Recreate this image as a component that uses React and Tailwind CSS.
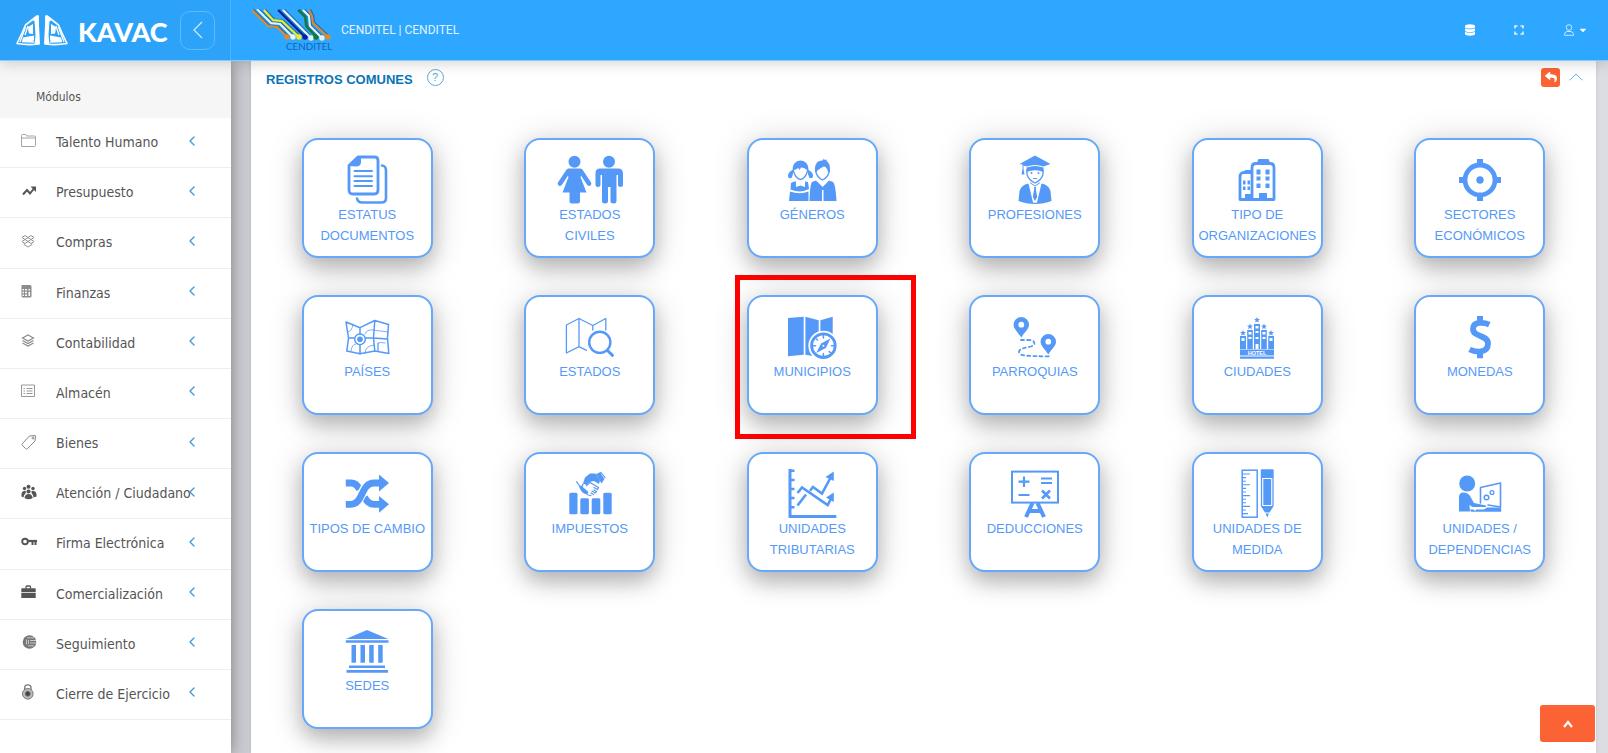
import React from "react";
import { FaDatabase, FaReply, FaCaretDown } from "react-icons/fa";
import { ChevronLeft, ChevronUp } from "lucide-react";

/* ---------- Brand drawings ---------- */

function KavacMark() {
  const half = (
    <g>
      <path d="M21 1L9.500 10L6 18 1 28.500Q12 30.500 22 29V1Z" fill="none" stroke="#fff" strokeWidth="1.600" strokeLinejoin="round" />
      <path d="M15 5L22.500 .5L24 29.500H18.500L19.500 20L18.500 6Z" fill="#fff" />
      <path d="M12 12L17 9V19L13 18.500 12.500 16.500Z M7 22.500L18 20.500V25.500L12 27 6 26.500Z" fill="#fff" />
      <path d="M12 11L9 20M9.500 12L4 27M6 26.500L18 27" stroke="#fff" strokeWidth="1.300" fill="none" />
    </g>
  );
  return (
    <svg viewBox="0 0 52 31" className="h-[31px] w-[52px] shrink-0" aria-hidden="true">
      {half}
      <g transform="translate(52 0) scale(-1 1)">{half}</g>
    </svg>
  );
}

function CenditelLogo() {
  const lines = [
    ["#e08a2c", "0,1 16,17 25,18 35,28"],
    ["#e9f3fb", "5,0 19,14 28,15 41,28"],
    ["#f2ee1c", "12,1 21,11 30,12 47,28"],
    ["#0a1fa0", "26,1 53,28"],
    ["#e9f3fb", "31,1 59,29"],
    ["#0f7d2c", "46,1 53,8 54,17 64,28"],
    ["#e9f3fb", "51,1 57,7 58,17 70,29"],
    ["#e08a2c", "57,1 60,7 61,14 76,28"],
  ];
  return (
    <svg viewBox="0 0 82 42" className="h-[42px] w-[82px] shrink-0" role="img" aria-label="CENDITEL">
      {lines.map(([c, p], i) => {
        const [x, y] = p.split(" ").pop().split(",");
        return (
          <g key={i}>
            <polyline points={p} fill="none" stroke="#1b4a74" strokeWidth="2.200" transform="translate(1.200 -.4)" opacity=".55" />
            <polyline points={p} fill="none" stroke={c} strokeWidth="2" />
            <circle cx={x} cy={y} r="2.700" fill={c} />
          </g>
        );
      })}
      <text x="34" y="41" fontSize="9.800" fontFamily="Lato, sans-serif" fill="#1763b5">CENDITEL</text>
    </svg>
  );
}

/* ---------- Record icons, drawn on a 72 x 49 field ---------- */

const line = { fill: "none", stroke: "currentColor", strokeLinecap: "round", strokeLinejoin: "round" };
const star = "M0-3L.9-1 3-.9 1.300.5 1.900 2.600 0 1.400-1.900 2.600-1.300.5-3-.9-.9-1Z";

const icons = {
  documents: (
    <>
      <path {...line} strokeWidth="2.800" d="M27 2H43.500Q47 2 47 5.500V35Q47 39 43.500 39H22Q18 39 18 35V10.500Z" />
      <path d="M18 11L27 1.500H30V8Q29 11.500 25 11.500Z" fill="currentColor" />
      <path {...line} strokeWidth="2" d="M23.500 16H41M23.500 21.300H41M23.500 26H41M23.500 31H41" />
      <path {...line} strokeWidth="2.600" d="M51 10.500Q55 11 55 15.500V43Q55 47.500 50.500 47.500H31Q27 47.500 26 43.500" />
    </>
  ),
  couple: (
    <g fill="currentColor">
      <circle cx="20.500" cy="6.700" r="6" />
      <circle cx="55" cy="6.700" r="6" />
      <path d="M14 13.500H27L29 17 26.500 22 32.500 37.500H26V46Q26 48.500 23.500 48.500H18Q15.500 48.500 15.500 46V37.500H8.500L14.500 22 12 17Z" />
      <path {...line} strokeWidth="4.600" d="M14 16.500L6 28.500M27 16.500L35 28.500" />
      <path d="M46 13.500H64Q69 13.500 69 18.500V30Q69 32 66.500 32 64 32 64 30V20H62.500V46Q62.500 48.500 59.500 48.500 56.500 48.500 56.500 46V32H54V46Q54 48.500 51 48.500 48 48.500 48 46V20H46.500V30Q46.500 32 44 32 41.500 32 41.500 30V18.500Q41.500 13.500 46 13.500Z" />
    </g>
  ),
  children: (
    <g fill="currentColor">
      <path d="M24.500 5.500Q32.500 6 32.500 15 37 17 37 21 37 24 33.500 23 32 20 31.500 16.500 31 14 28 13 L25 12.500 23.500 15 22.500 13 17.500 15.500Q17 20 15.500 23 12 24 12 21 12 17 16.500 15 16.500 6 24.500 5.500Z" />
      <path {...line} strokeWidth="1.300" d="M17.500 16Q19.500 23.500 24.500 24.500 29.500 23.500 31.500 16M39.500 16Q41.500 23 46.500 25 51.500 23 53.500 16" />
      <path d="M46.500 5.500L48 3.500 48.500 5 51 4.500 50.500 6Q54.500 8 54 17L52 17Q51 12 48 11.500 42 14 40.500 17L39 17Q38 5.500 46.500 5.500Z" />
      <path d="M18 26.500H20L20 32 24.500 30.500 29 32 29 26.500 32 27 33 34Q25 38.500 14.500 34.500L15 28Z" />
      <path d="M14 36.500Q24 40 32.500 36.500V46H13Z" />
      <path d="M40 25.500L46.700 32 53 25.500 57 27Q59.500 29 60.500 46H47.500V35H46V46H33.500Q34 29 36 27Z" />
    </g>
  ),
  graduate: (
    <g fill="currentColor">
      <path d="M36 .5L51.500 9 44.500 11.500Q36 8.500 27.500 11.500L24.500 10.500V14L25.500 19.500H22.500L23.500 14V9.500L20.500 9Z" />
      <path d="M27.500 12.500Q36 9.500 44.500 12.500V17Q36 13.500 27.500 17Z" />
      <path {...line} strokeWidth="1.300" d="M28 15V19.500Q29.500 25 36 28 42.500 25 44 19.500V15" />
      <circle cx="32.500" cy="18" r="1" /><circle cx="39.500" cy="18" r="1" />
      <path {...line} strokeWidth="1" d="M34.500 23.500H37.500" />
      <path d="M29.500 28.500L34 47.500 36 48 38 47.500 42.500 28.500Q50 30 51.500 36L52.500 46Q45 49 36 49 27 49 19.500 46L20.500 36Q22 30 29.500 28.500Z" />
      <path d="M35 32H37L36.800 34 38.200 42 36 46 33.800 42 35.200 34Z" />
      <path {...line} strokeWidth="1" d="M31.500 28L36 31 40.500 28" />
    </g>
  ),
  buildings: (
    <g fill="currentColor">
      <path {...line} strokeWidth="2.800" d="M31 44.500V12.500Q31 8.500 35 8.500H49Q53 8.500 53 12.500V44.500ZM30 17.500H22Q19 18.500 19 21.500V44.500H30" />
      <path d="M36 7.500L37.500 4H47.500L49 7.500ZM22 17L24.500 15H30V18Z" />
      <path d="M35.500 14.500h4v5h-4zM44.500 14.500h4v5h-4zM35.500 21.500h4v4h-4zM44.500 21.500h4v4h-4zM35.500 28.500h4v4.500h-4zM44.500 28.500h4v4.500h-4zM38 38h8v7h-8z" />
      <path d="M22 25.500h2.500v4H22zM26.500 25.500h2.500v4h-2.500zM22 31.500h2.500v3.500H22zM26.500 31.500h2.500v3.500h-2.500zM24 39h6v6h-6z" />
    </g>
  ),
  target: (
    <g fill="currentColor">
      <circle cx="36" cy="25" r="15" fill="none" stroke="currentColor" strokeWidth="4.800" />
      <circle cx="36" cy="25" r="3.700" />
      <path d="M33 4h6v6h-6zM33 40h6v6h-6zM15 22h6v6h-6zM51 22h6v6h-6z" />
    </g>
  ),
  worldmap: (
    <g {...line}>
      <path strokeWidth="1.500" d="M15 10L29 15.700 43.800 8.500 57.500 12.500 56.500 26.300 57.800 41.500 43.800 39 29 41.800 15.800 39 17.500 26ZM43.800 8.500L42.500 26 43.800 39M29 15.700V22M29 33V42M17.500 26H23.500M34.500 26H42.500L56.500 27" />
      <path strokeWidth=".8" d="M34 22Q36 17 42 18L57 20M16.500 20Q21 20 22 12M20 39Q21 32 25 32M34 41Q34 34 43 33M47 39V31Q50 30 54 31M47 31V39" />
      <circle cx="29" cy="27.300" r="5.300" strokeWidth="1.400" />
      <circle cx="29" cy="27.300" r="2.800" fill="currentColor" stroke="none" />
    </g>
  ),
  mapsearch: (
    <g {...line}>
      <path strokeWidth="1.300" d="M32.500 38.300L25 34.700 12.400 41V13L25 6.500 38.800 13.500 51.800 6.500V18M25 6.500V34.700M38.800 13.500V18" />
      <circle cx="45.800" cy="30.300" r="10.600" strokeWidth="2.400" />
      <path strokeWidth="3" d="M53.500 38.500L58.500 43.300" />
    </g>
  ),
  mapcompass: (
    <g fill="currentColor">
      <path d="M12 6L27.700 4.700V42.700L12 44.200ZM29.400 4.700L42.700 8.300V45L29.400 42.700ZM44.400 8.300L56.700 4.700V30H44.400Z" />
      <circle cx="47.400" cy="33.700" r="15" fill="#fff" />
      <circle cx="47.400" cy="33.700" r="11.800" fill="none" stroke="currentColor" strokeWidth="2.800" />
      <path d="M54.500 26.500L49.800 36 40.300 41 45 31.500Z" />
      <circle cx="47.400" cy="33.700" r="1" fill="#fff" />
      <path {...line} strokeWidth="1.500" d="M47.400 23V26M47.400 41.500V44M37 33.700H39.500M55.500 33.700H58M40.500 27L41.500 28M53.300 39.600L54.500 40.700" />
    </g>
  ),
  route: (
    <g fill="currentColor">
      <path fillRule="evenodd" d="M22.300 5A7.800 7.800 0 0 1 30 12.700C30 17 26 19.500 22.300 25.500 18.500 19.500 14.600 17 14.600 12.700A7.800 7.800 0 0 1 22.300 5ZM22.300 9.800A2.900 2.900 0 1 0 22.300 15.600 2.900 2.900 0 1 0 22.300 9.800Z" />
      <path fillRule="evenodd" d="M49.300 22A7.800 7.800 0 0 1 57 29.700C57 34 53 36.500 49.300 42.500 45.500 36.500 41.600 34 41.600 29.700A7.800 7.800 0 0 1 49.300 22ZM49.300 26.800A2.900 2.900 0 1 0 49.300 32.600 2.900 2.900 0 1 0 49.300 26.800Z" />
      <path {...line} strokeWidth="1.800" strokeDasharray="3 3.200" d="M22 28H29C37 28 37 33 32 34.500 26 36 20 36.500 20 40 20 44.500 32 44 51 44.500" />
    </g>
  ),
  hotel: (
    <g fill="currentColor">
      <path fillRule="evenodd" d="M19 24H25V37H19ZM20.500 26V29H23.500V26ZM26.200 18H31.800V37H26.200ZM27.500 20V22.500H30.500V20ZM27.500 25V27H30.500V25ZM33 12H39V37H33ZM34.500 14V16.500H37.500V14ZM34.500 19V21H37.500V19ZM34.500 25V27H37.500V25ZM34.500 32V37H37.500V32ZM40.200 18H45.800V37H40.200ZM41.500 20V22.500H44.500V20ZM41.500 25V27H44.500V25ZM47.200 24H53V37H47.200ZM48.500 26V29H51.500V26Z" />
      <path d="M19 37.500H53V43.500H19ZM19 44.500H53V46.800H19Z" />
      <path d={star} transform="translate(22 21)" /><path d={star} transform="translate(29 14.600)" />
      <path d={star} transform="translate(36 8)" /><path d={star} transform="translate(43 14.600)" />
      <path d={star} transform="translate(50 21)" />
      <text x="36" y="42.600" textAnchor="middle" fontSize="5.500" fontWeight="700" fontFamily="Liberation Sans, sans-serif" fill="#fff">HOTEL</text>
    </g>
  ),
  dollar: (
    <g fill="currentColor">
      <path d="M45.300 12.600C41.500 10.800 29 8.500 29 17 29 25.500 44 22.500 44 31.500 44 41.500 31.500 40.500 25.600 37.500" fill="none" stroke="currentColor" strokeWidth="5.800" />
      <path d="M33 4h6v7h-6zM33 39h6v7.300h-6z" />
    </g>
  ),
  shuffle: (
    <g fill="currentColor">
      <path fill="none" stroke="currentColor" strokeWidth="6.800" d="M14.800 14H20Q25.500 14 28.500 20.500M33.500 28Q37 35.300 43 35.300H49" />
      <path fill="none" stroke="#fff" strokeWidth="9" d="M26 33C31 28 32 18 37 15" />
      <path fill="none" stroke="currentColor" strokeWidth="6.800" d="M14.800 35.300H20C32.500 35.300 29.500 14 43 14H49" />
      <path d="M48 5.500L58 14 48 22.500ZM48 27L58 35.300 48 43.800Z" />
    </g>
  ),
  taxes: (
    <g fill="currentColor">
      <rect x="15.300" y="23.700" width="8.200" height="21.500" rx="1.500" />
      <rect x="26.300" y="29.300" width="8.600" height="15.900" rx="1.500" />
      <rect x="37.700" y="29.300" width="8.600" height="15.900" rx="1.500" />
      <rect x="49.300" y="23.700" width="8.400" height="21.500" rx="1.500" />
      <path d="M42 5L46 3.500 50.500 10 47.500 14.500Z" />
      <path {...line} strokeWidth="1.200" d="M45 4.500L47 3.500 51 8.500" />
      <path d="M31 8.500L36 4.500H41.500L46 11.500 45 15 40 12 35.500 13 32.500 16 29 14.500Z" />
      <path d="M25 17.500L27 16.500 34.500 23 32.500 25.500Q27 24 25 17.500Z" />
      <path {...line} strokeWidth="1.200" d="M22.500 12.700L26.500 18M29 15L28 18.500 34 26 37 26.500M32.500 16.500L36 13.500 44.500 18.500 43.500 20.500 40 18.500M40 21L42.500 22.500 41 24 38 22M37 24L39.500 25.500" />
    </g>
  ),
  linechart: (
    <g fill="none" stroke="currentColor">
      <path strokeWidth="3" d="M14 0V47.500H60.300" />
      <path strokeWidth="2.500" d="M14 1.700H18.500M14 11H18.500M14 20H18.500M14 29H18.500M14 38.300H18.500" />
      <path strokeWidth="2.600" d="M21.500 24L26 18.500 51.700 36 55.800 28M21.500 36.500L30 25.500M34 21.700L37 18 46 24.500 56 6" />
      <path stroke="none" fill="currentColor" d="M57.800 2.500V12L49.500 8ZM57.800 23.500V33L50 28.500Z" />
    </g>
  ),
  board: (
    <g fill="none" stroke="currentColor">
      <rect x="13" y="2.600" width="46" height="31" strokeWidth="2" />
      <path strokeWidth="2.200" d="M19.500 12.700H30.500M25 7.500V18M42 9.500H53M42 14H53M19.500 26H30.500" />
      <path strokeWidth="2.600" d="M43 21.500L51 29.500M51 21.500L43 29.500" />
      <path strokeWidth="4" d="M27 48L33.500 34M45 48L38.500 34M29 42H43" />
    </g>
  ),
  ruler: (
    <g fill="none" stroke="currentColor">
      <rect x="21.200" y="1.200" width="15" height="47" strokeWidth="1.500" />
      <path strokeWidth="1.100" d="M21 5H29M21 8.600H25M21 12.200H25M21 15.800H29M21 19.400H25M21 23H25M21 26.600H29M21 30.200H25M21 33.800H25M21 37.400H29M21 41H25M21 44.600H27" />
      <path stroke="none" fill="currentColor" d="M39.800 1.500Q39.800.3 41 .3H51.500Q52.700.3 52.700 1.500V9H39.800ZM42.300 10H50.200V36H42.300ZM39.800 37H52.700L48.500 43.500H44ZM44.500 44.500H48L46.300 48.500Z" />
      <path strokeWidth="1.300" d="M40.500 9V37M52 9V37" />
    </g>
  ),
  desk: (
    <g fill="currentColor">
      <circle cx="23.200" cy="14.500" r="8" />
      <path d="M15 28Q15 23.500 19.500 23.500 24 23.500 26 27L30 34 42 36.500V38L28.500 38 25.500 36 26 42.500H15Z" />
      <path {...line} strokeWidth="1.600" d="M36.500 34V18.500L56.500 14V38L44 36" />
      <path d="M43 38.500H57.200V42.800H27L26 40.500H40Z" />
      <circle cx="42.500" cy="28.500" r="2.300" fill="none" stroke="currentColor" strokeWidth="1.500" />
      <circle cx="48" cy="23.500" r="1.900" fill="none" stroke="currentColor" strokeWidth="1.300" />
      <circle cx="31" cy="40.800" r="1" fill="#fff" />
    </g>
  ),
  bank: (
    <path fill="currentColor" d="M36 4L57.300 13H14.700ZM14.800 14.200H57.500V16.700H14.800ZM20.500 19H25V36.700H20.500ZM29.500 19H34V36.700H29.500ZM38.200 19H42.700V36.700H38.200ZM47.200 19H51.700V36.700H47.200ZM18 39.500H54V42H18ZM15.500 43.900H57V46.700H15.500Z" />
  ),
};

const records = [
  ["documents", "ESTATUS\nDOCUMENTOS"],
  ["couple", "ESTADOS\nCIVILES"],
  ["children", "GÉNEROS"],
  ["graduate", "PROFESIONES"],
  ["buildings", "TIPO DE\nORGANIZACIONES"],
  ["target", "SECTORES\nECONÓMICOS"],
  ["worldmap", "PAÍSES"],
  ["mapsearch", "ESTADOS"],
  ["mapcompass", "MUNICIPIOS", true],
  ["route", "PARROQUIAS"],
  ["hotel", "CIUDADES"],
  ["dollar", "MONEDAS"],
  ["shuffle", "TIPOS DE CAMBIO"],
  ["taxes", "IMPUESTOS"],
  ["linechart", "UNIDADES\nTRIBUTARIAS"],
  ["board", "DEDUCCIONES"],
  ["ruler", "UNIDADES DE\nMEDIDA"],
  ["desk", "UNIDADES /\nDEPENDENCIAS"],
  ["bank", "SEDES"],
];

function RecordCard({ icon, label, highlighted }) {
  return (
    <li className="relative flex h-[120px] w-[131px]">
      <a
        href="#"
        className="flex w-full flex-col items-center rounded-[16px] border-2 border-[#66a8fa] bg-white pt-[15px] text-center text-[13px] leading-[21px] text-[#5599f8] shadow-[0_10px_20px_rgba(0,0,0,0.22),0_4px_36px_rgba(0,0,0,0.16)]"
      >
        <svg viewBox="0 0 72 49" className="h-[49px] w-[72px] shrink-0 overflow-visible" aria-hidden="true">
          {icons[icon]}
        </svg>
        <span className="w-full whitespace-pre-line">{label}</span>
      </a>
      {highlighted && (
        <span className="pointer-events-none absolute -top-5 -left-3 h-[164px] w-[181px] border-[5px] border-[#ff0000]" />
      )}
    </li>
  );
}

/* ---------- Sidebar ---------- */

function Small({ children, className = "" }) {
  return (
    <svg viewBox="0 0 16 16" className={"size-4 " + className} fill="none" stroke="currentColor" aria-hidden="true">
      {children}
    </svg>
  );
}

const modules = [
  ["Talento Humano", <Small className="text-[#a5a5a5]"><path d="M.5 13.500V2.500Q.5 1.500 1.500 1.500H4.500Q5.500 1.500 5.500 2.500V3H13.500Q14.500 3 14.500 4V12.500Q14.500 13.500 13.500 13.500ZM.5 5H14.500" /></Small>],
  ["Presupuesto", <Small className="text-[#555]"><path strokeWidth="2" d="M2 11.500L6 7 9 10.500 13 5.500" /><path fill="currentColor" stroke="none" d="M9.500 3.500H15V9Z" /></Small>],
  ["Compras", <Small className="text-[#888]"><path strokeWidth=".9" d="M4 2.500L7 4.500 4 6.500 1 4.500ZM10 2.500L7 4.500 10 6.500 13 4.500ZM4 6.500L1 8.500 4 10.500 7 8.500ZM10 6.500L13 8.500 10 10.500 7 8.500ZM3 10.500V11.500L7 14 11 11.500V10.500" /></Small>],
  ["Finanzas", <Small className="text-[#8c8c8c]"><path fill="currentColor" stroke="none" fillRule="evenodd" d="M1.500 2H9Q10.500 2 10.500 3.500V13Q10.500 14.500 9 14.500H2Q.5 14.500.5 13V3Q.5 2 1.500 2ZM1.500 6V7.500H3V6ZM4 6V7.500H6V6ZM7.500 6V7.500H9V6ZM1.500 8.800V10.300H3V8.800ZM4 8.800V10.300H6V8.800ZM7.500 8.800V13H9V8.800ZM1.500 11.500V13H3V11.500ZM4 11.500V13H6V11.500Z" /></Small>],
  ["Contabilidad", <Small className="text-[#888]"><path strokeWidth="1.100" d="M7 2L12.500 5 7 8 1.500 5ZM1.500 7.500L7 10.500 12.500 7.500M1.500 10L7 13 12.500 10" /></Small>],
  ["Almacén", <Small className="text-[#999]"><path d="M.5 2H13.500V13.500H.5ZM5.500 5.500H11.500M5.500 8H11.500M5.500 10.500H11.500M2.500 5.500H4M2.500 8H4M2.500 10.500H4" /></Small>],
  ["Bienes", <Small className="text-[#888]"><path d="M1 10L8.500 2 14 1.500Q15 1.500 14.500 3L14 7 6.500 14.500Q5.500 15.500 4.500 14.500L1 11Q.5 10.500 1 10Z" /><circle cx="12" cy="4" r="1" /></Small>],
  ["Atención / Ciudadano", <Small className="text-[#555]"><g fill="currentColor" stroke="none"><circle cx="7.500" cy="2.700" r="2" /><circle cx="3.500" cy="4.500" r="1.700" /><circle cx="12" cy="4.500" r="1.700" /><circle cx="7.500" cy="7.500" r="2.100" /><path d="M.5 12.500Q0 7 3.500 6.700L5 7.500 4.500 9.500Q2.500 11 2.500 13.500ZM15.500 12.500Q16 7 12 6.700L10.300 7.500 10.800 9.500Q12.500 11 12.500 13.500ZM3.500 14Q4 10 7.500 10 11 10 11.700 14 7.500 16.500 3.500 14Z" /></g></Small>],
  ["Firma Electrónica", <Small className="text-[#555]"><circle cx="4" cy="7.500" r="2.800" strokeWidth="1.900" /><path strokeWidth="2.200" d="M7 7H16" /><path strokeWidth="2" d="M11.500 8V11M14.500 8V11" /></Small>],
  ["Comercialización", <Small className="text-[#555]"><path strokeWidth="1.300" d="M5 4.500V3Q5 2 6 2H8.500Q9.500 2 9.500 3V4.500" /><path fill="currentColor" stroke="none" d="M1 4.300H14Q14.700 4.300 14.700 5V8.300H.3V5Q.3 4.300 1 4.300ZM.3 9H14.700V14H.3Z" /></Small>],
  ["Seguimiento", <Small className="text-[#555]"><circle cx="8.500" cy="8" r="6.800" fill="currentColor" stroke="none" opacity=".8" /><path stroke="#fff" strokeWidth=".6" d="M6 3.800H13M9 6.500H15M9 9H15M7 11.800H13M5.500 5.500V10.500M7.500 6V10" /></Small>],
  ["Cierre de Ejercicio", <Small className="text-[#777]"><path strokeWidth="1.300" d="M3.700 6V3.800Q3.700.8 6.800.8 10 .8 10 3.800V6" /><circle cx="6.800" cy="9.800" r="5.300" fill="#bbb" /><circle cx="6.800" cy="9.800" r="2.400" fill="#444" stroke="#666" /></Small>],
];

function Sidebar() {
  return (
    <aside className="relative z-10 w-[231px] shrink-0 bg-white font-['DejaVu_Sans_Condensed','DejaVu_Sans',sans-serif] text-[#555] shadow-[0_0_14px_rgba(0,0,0,0.4)]">
      <h2 className="flex h-[57px] items-center bg-[#f6f6f6] pt-[14px] pl-9 text-[12px]">Módulos</h2>
      <ul className="grid h-[602px] auto-rows-fr">
        {modules.map(([name, icon]) => (
          <li key={name} className="border-b border-[#eeeeee]">
            <a href="#" className="flex h-full items-center pl-[21px]">
              <span className="mb-1 w-[35px] shrink-0">{icon}</span>
              <span className="w-32 shrink-0 text-[14px] whitespace-nowrap">{name}</span>
              <ChevronLeft className="mb-1 size-4 shrink-0 text-[#3f9bdc]" strokeWidth={2} aria-hidden="true" />
            </a>
          </li>
        ))}
      </ul>
    </aside>
  );
}

/* ---------- Page ---------- */

export default function App() {
  return (
    <div className="flex min-h-screen flex-col bg-[#dcdde3] font-['Liberation_Sans',Arial,sans-serif]">
      <header className="sticky top-0 z-20 flex h-[61px] shrink-0 border-b border-[#84cbff] bg-[#2da7ff] text-white shadow-[0_2px_14px_rgba(0,0,0,0.18)]">
        <div className="flex w-[231px] shrink-0 items-center border-r border-[#4fb5fd] bg-[#2ca3f9] pl-4">
          <KavacMark />
          <span className="w-[112px] pt-1 pl-[10px] font-['Lato',sans-serif] text-[27px] font-black">KAVAC</span>
          <button type="button" aria-label="Contraer menú" className="flex h-[39px] w-[35px] items-center justify-center rounded-[10px] border border-[#5cbaff]">
            <svg viewBox="0 0 10 18" className="h-[18px] w-[10px]" fill="none" stroke="#cfeaff" strokeWidth="1.200" aria-hidden="true">
              <path d="M9 1L1 9L9 17" />
            </svg>
          </button>
        </div>
        <div className="flex flex-1 items-center justify-between pr-5 pl-[21px]">
          <div className="flex items-center gap-[7px]">
            <CenditelLogo />
            <span className="font-['Roboto',sans-serif] text-[12px] text-[#e3f3ff]">CENDITEL | CENDITEL</span>
          </div>
          <nav className="flex items-center">
            <button type="button" aria-label="Base de datos" className="mr-[39px]"><FaDatabase className="h-3 w-[10px]" /></button>
            <button type="button" aria-label="Pantalla completa" className="mr-10">
              <svg viewBox="0 0 10 10" className="size-[10px]" fill="none" stroke="#e3f3ff" strokeWidth="1.600"><path d="M1 3.500V1H3.500M6.500 1H9V3.500M9 6.500V9H6.500M3.500 9H1V6.500" /></svg>
            </button>
            <button type="button" aria-label="Usuario" className="flex items-center gap-1">
              <svg viewBox="0 0 10 12" className="h-3 w-[10px]" fill="none" stroke="#c8e8ff"><circle cx="5" cy="3.500" r="2.800" /><path d="M.5 11.300V10.500Q.5 8 3 7.500H7Q9.500 8 9.500 10.500V11.300Z" /></svg>
              <FaCaretDown className="size-[10px]" />
            </button>
          </nav>
        </div>
      </header>

      <div className="flex flex-1">
        <Sidebar />
        <main className="flex flex-1 bg-gradient-to-r from-[#cacbd0] from-20% to-[#dcdde3] to-80% pr-3 pl-5">
          <section className="flex-1 bg-white px-[5px] shadow-[0_0_3px_rgba(0,0,0,0.1)]">
            <div className="flex h-8 items-center justify-between pr-[3px] pl-[10px]">
              <div className="flex items-center gap-[14px]">
                <h1 className="pt-[5px] text-[13px] font-bold text-[#0a74b8]">REGISTROS COMUNES</h1>
                <button type="button" aria-label="Ayuda" className="flex size-[17px] items-center justify-center rounded-full border border-[#5ba7d6] text-[11px] text-[#5ba7d6]">?</button>
              </div>
              <div className="flex items-center gap-1">
                <button type="button" aria-label="Volver" className="flex size-[19px] items-center justify-center rounded-[3px] bg-[#fb6334] text-white"><FaReply className="size-3" /></button>
                <button type="button" aria-label="Minimizar"><ChevronUp className="size-6 text-[#5cb6f2]" strokeWidth={1} /></button>
              </div>
            </div>
            <ul className="grid grid-cols-6 justify-items-center gap-y-[37px] pt-[45px] pb-6">
              {records.map(([icon, label, highlighted]) => (
                <RecordCard key={label} icon={icon} label={label} highlighted={highlighted} />
              ))}
            </ul>
          </section>
        </main>
      </div>

      <button type="button" aria-label="Ir arriba" className="fixed right-[13px] bottom-[11px] z-30 flex h-[37px] w-[55px] items-center justify-center rounded-[3px] bg-[#fb6334] text-white">
        <svg viewBox="0 0 10 8" className="h-2 w-[10px]" fill="none" stroke="#fff" strokeWidth="2.200"><path d="M1 7L5 2L9 7" /></svg>
      </button>
    </div>
  );
}
